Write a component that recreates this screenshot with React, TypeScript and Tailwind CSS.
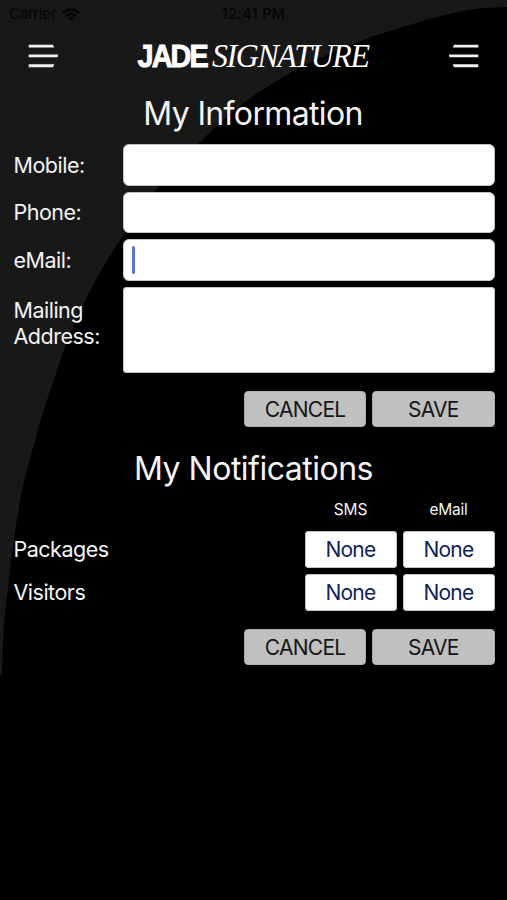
import React from "react";

const fieldBorder = "border border-[#c4c4c4] bg-white";

function Backdrop() {
  return (
    <svg className="absolute inset-0 h-full w-full" viewBox="0 0 507 900" aria-hidden="true">
      <rect width="507" height="900" fill="#000" />
      <path
        d="M0 0H507V7C489 7 471 9 453 13C439 16 426 20 413 24C387 31 361 40 336 51C305 64 278 79 253 96C234 110 217 125 200 142C184 157 170 172 157 189C144 204 133 220 122 237C108 258 95 280 84 303C70 331 61 357 53 383C46 402 40 421 35 441C30 457 26 474 22 490C19 507 16 524 14 540C11 557 9 574 8 590C5 607 4 623 3 640L2 675H0Z"
        fill="#181818"
      />
    </svg>
  );
}

function StatusBar() {
  return (
    <div className="grid h-7 grid-cols-3 items-center px-[9px] text-[15px] leading-7 text-[#050505]">
      <div className="flex items-center gap-[6px]">
        <span className="tracking-[-0.3px]">Carrier</span>
        <svg width="18" height="13" viewBox="0 0 18 13" fill="none" stroke="#050505" strokeWidth="2.5">
          <path d="M1 5C5.4.7 12.600.7 17 5" />
          <path d="M4 8C6.800 5.400 11.200 5.400 14 8" />
          <path d="M9 12.700L5.900 9.700C7.600 8.100 10.400 8.100 12.100 9.700Z" fill="#050505" stroke="none" />
        </svg>
      </div>
      <span className="whitespace-nowrap text-center font-medium tracking-[0.1px]">12:41 PM</span>
    </div>
  );
}

function MenuIcon({ flip = false }: { flip?: boolean }) {
  return (
    <svg width="30" height="24" viewBox="0 0 30 24" fill="#f0f3f0" className={flip ? "-scale-x-100" : ""}>
      <path d="M.7 .7H24.800L26.300 3.600H.7Z" />
      <path d="M.7 10.600H30L29.600 13.200H.7Z" />
      <path d="M.7 20.300H26.300L25 23.200H.7Z" />
    </svg>
  );
}

function Logo() {
  return (
    <svg width="264" height="56" viewBox="0 0 264 56" fill="#fff" className="overflow-visible">
      <g transform="translate(15.500 38.800) scale(.93 1)">
        <text className="tracking-[-2px]" fontSize="31" fontWeight="700" fontFamily="'Liberation Sans', Arial, sans-serif" stroke="#fff" strokeWidth=".9">JADE</text>
      </g>
      <g transform="translate(90 38.800) scale(.955 1)">
        <text className="tracking-[-1.500px]" fontSize="33.500" fontStyle="italic" fontFamily="'Liberation Serif', serif">SIGNATURE</text>
      </g>
    </svg>
  );
}

function Actions() {
  const button = "h-[36.500px] rounded-[4px] border border-[#aaa] bg-[#c0c0c0] text-[21px] leading-[35px] tracking-[-0.750px] text-[#151515]";
  return (
    <div className="ml-auto grid w-[250.500px] grid-cols-2 gap-[6px]">
      <button className={button}>CANCEL</button>
      <button className={button}>SAVE</button>
    </div>
  );
}

function Field({ label, active = false }: { label: string; active?: boolean }) {
  return (
    <div className="flex h-[41.500px] items-center">
      <label className="w-[109.500px] shrink-0">{label}</label>
      <div className={`${fieldBorder} flex h-full flex-1 items-center rounded-[6px] pl-2`}>
        {active && <span className="h-7 w-[3px] rounded-full bg-[#5875dc]" />}
      </div>
    </div>
  );
}

function Preference({ label }: { label: string }) {
  const select = "h-[37px] w-[92px] rounded-[3px] border border-[#c4c4c4] bg-white text-[21px] leading-[36px] tracking-[-0.750px] text-[#10235e]";
  return (
    <div className="flex items-center gap-[6px]">
      <span className="flex-1">{label}</span>
      <button className={select}>None</button>
      <button className={select}>None</button>
    </div>
  );
}

export default function App() {
  return (
    <div className="relative h-[900px] w-[507px] overflow-hidden bg-black font-['Inter',sans-serif] text-[#f4f4f4]">
      <Backdrop />
      <div className="relative">
        <StatusBar />
        <header className="flex h-14 items-center justify-between px-[28px]">
          <MenuIcon />
          <Logo />
          <MenuIcon flip />
        </header>
        <main className="pl-[13.500px] pr-[12.500px] text-[21.500px] leading-[26px] tracking-[-0.500px]">
          <h1 className="h-[60px] pr-[2px] text-center text-[32px] leading-[60px] tracking-[-0.650px]">My Information</h1>
          <section className="flex flex-col gap-[6px]">
            <Field label="Mobile:" />
            <Field label="Phone:" />
            <Field label="eMail:" active />
            <div className="flex h-[86px]">
              <label className="w-[109.500px] shrink-0 pt-[10px]">Mailing<br />Address:</label>
              <div className={`${fieldBorder} flex-1 rounded-[3px]`} />
            </div>
          </section>
          <div className="mt-[18px]"><Actions /></div>
          <h2 className="mt-[12px] h-[58px] pr-[1px] text-center text-[32px] leading-[60px] tracking-[-0.500px]">My Notifications</h2>
          <div className="flex h-[33.500px] justify-end gap-[6px] text-[15.500px] leading-[26px] tracking-[-0.200px]">
            <span className="w-[92px] text-center">SMS</span>
            <span className="w-[92px] text-center">eMail</span>
          </div>
          <section className="flex flex-col gap-[6px]">
            <Preference label="Packages" />
            <Preference label="Visitors" />
          </section>
          <div className="mt-[18px]"><Actions /></div>
        </main>
      </div>
    </div>
  );
}
